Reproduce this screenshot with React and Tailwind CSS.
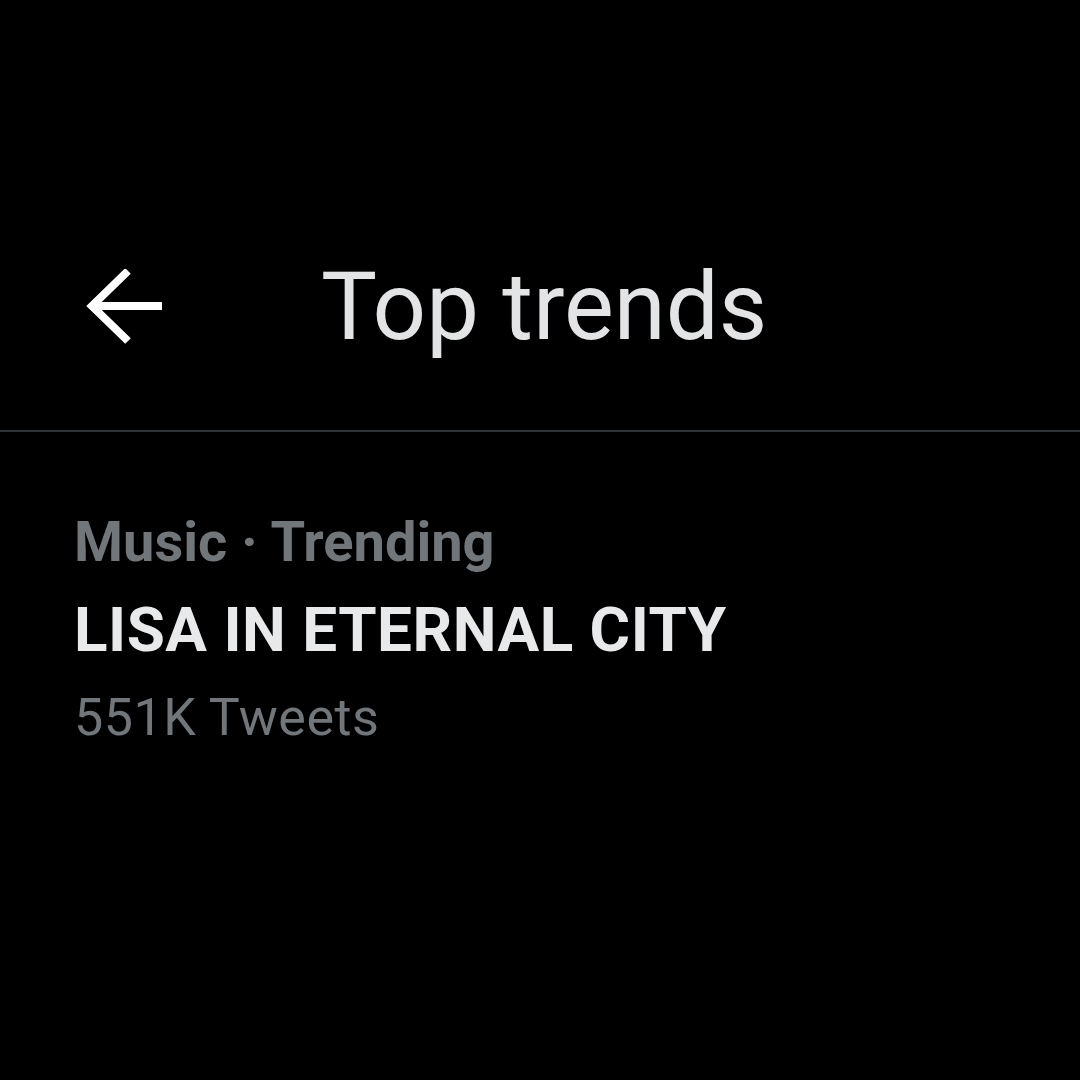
export default function App() {
  return (
    <div className="w-[1080px] h-[1080px] bg-black overflow-hidden" style={{ fontFamily: 'Roboto, "Liberation Sans", sans-serif' }}>
      <div className="h-[430px] flex items-end pb-[76px]">
        <div className="flex items-center">
          <svg className="ml-[86px] w-[80px] h-[76px]" viewBox="0 0 80 76" fill="none" stroke="#ffffff" strokeWidth="8">
            <path d="M6 37 H76" />
            <path d="M42 2 L6 37 L42 72" strokeLinejoin="miter" />
          </svg>
          <h1 className="ml-[155px] text-[94px] leading-none text-[#e2e4e5] font-normal">Top trends</h1>
        </div>
      </div>
      <div className="h-[2px] bg-[#2f3336]" />
      <div className="pl-[74px] pt-[66px] flex flex-col">
        <div className="text-[56px] leading-[88px] font-bold text-[#71767b]">Music · Trending</div>
        <div className="text-[62px] leading-[88px] font-bold text-[#e7e9ea] tracking-[0.5px]">LISA IN ETERNAL CITY</div>
        <div className="text-[52px] leading-[88px] font-normal text-[#71767b] tracking-[0.5px]">551K Tweets</div>
      </div>
    </div>
  );
}
